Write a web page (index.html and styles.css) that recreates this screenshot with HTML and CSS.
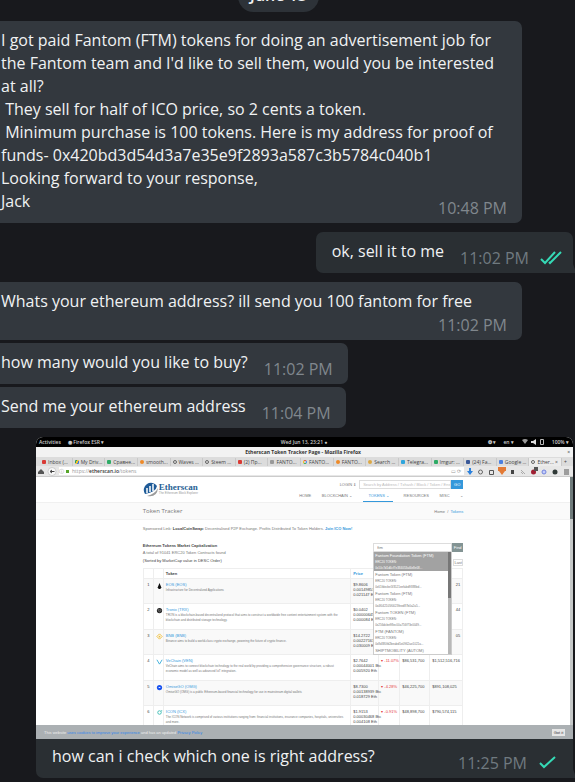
FILE: index.html
```html
<!DOCTYPE html>
<html lang="en">
<head>
  <meta charset="UTF-8">
  <meta name="viewport" content="width=device-width, initial-scale=1.0">
  <title>Chat</title>
  <link rel="stylesheet" href="styles.css">
</head>
<body>
  <main class="chat">
    <div class="date"><span>June 13</span></div>

    <div class="bubble in wide overlap">
      <p>I got paid Fantom (FTM) tokens for doing an advertisement job for the Fantom team and I'd like to sell them, would you be interested at all?<br>&nbsp;They sell for half of ICO price, so 2 cents a token.<br>&nbsp;Minimum purchase is 100 tokens. Here is my address for proof of funds- 0x420bd3d54d3a7e35e9f2893a587c3b5784c040b1<br>Looking forward to your response,<br>Jack</p>
      <time>10:48 PM</time>
    </div>

    <div class="bubble out">
      <p>ok, sell it to me</p>
      <time>11:02 PM</time>
      <svg class="ticks" viewBox="0 0 22 14" aria-label="Read"><path d="M1 8l4 4L15 1M9 11l1 1L21 1"/></svg>
    </div>

    <div class="bubble in wide stack">
      <p>Whats your ethereum address? ill send you 100 fantom for free</p>
      <time>11:02 PM</time>
    </div>

    <div class="bubble in next">
      <p>how many would you like to buy?</p>
      <time>11:02 PM</time>
    </div>

    <div class="bubble in next">
      <p>Send me your ethereum address</p>
      <time>11:04 PM</time>
    </div>

    <div class="photo">
      <div class="shot">
        <div class="topbar">
          <div class="topbar-left"><span>Activities</span><span>◉ Firefox ESR ▾</span></div>
          <span>Wed Jun 13, 23:21 ●</span>
          <div class="topbar-right">
            <span>❂ ▾</span><span>en ▾</span>
            <svg viewBox="0 0 24 8"><path d="M1 2q3-2 6 0L4 6z" fill="#999"/><path d="M10 3h2l3-2v6l-3-2h-2z" fill="#ddd"/><path d="M19.500 1.500h3v5h-3z" fill="none" stroke="#bbb"/></svg>
            <span>100% ▾</span>
          </div>
        </div>
        <div class="titlebar"><b>Etherscan Token Tracker Page - Mozilla Firefox</b><span>×</span></div>
        <div class="tabs">
          <span><i class="fav red"></i>Inbox (...</span>
          <span><i class="fav drive"></i>My Driv...</span>
          <span><i class="fav green"></i>Сравне...</span>
          <span><i class="fav orange"></i>smooth...</span>
          <span><i class="fav ring"></i>Waves ...</span>
          <span><i class="fav ring"></i>Steem ...</span>
          <span><i class="fav red"></i>(2) Пр...</span>
          <span><i class="fav grey"></i>FANTO...</span>
          <span><i class="fav google"></i>FANTO...</span>
          <span><i class="fav orange"></i>FANTO...</span>
          <span><i class="fav gold"></i>Search ...</span>
          <span><i class="fav sky"></i>Telegra...</span>
          <span><i class="fav green"></i>Imgur: ...</span>
          <span><i class="fav navy"></i>(24) Fa...</span>
          <span><i class="fav blue"></i>Google ...</span>
          <span class="current"><i class="fav ring"></i>Ether... ×</span>
          <span class="plus">+</span>
        </div>
        <div class="urlbar">
          <svg class="nav-icons" viewBox="0 0 30 9"><path d="M2 5l3-3 3 3v2H2z" fill="#555"/><circle cx="16" cy="4.500" r="4" fill="#fafafa" stroke="#aaa" stroke-width=".5"/><path d="M18.500 4.500h-4M16 3l-2 1.500L16 6" fill="none" stroke="#444"/></svg>
          <div class="address">
            <span class="info">ⓘ</span><i class="lock"></i>
            <span>https://<b>etherscan.io</b>/tokens</span>
            <span class="reload">▭ ⟳</span>
          </div>
          <svg class="tools" viewBox="0 0 104 9">
            <path d="M4 1h2v3h2L5 8 2 4h2z" fill="#2b80dc"/>
            <circle cx="15.500" cy="5" r="2" fill="none" stroke="#666"/>
            <path d="M24.500 3.500h4v4h-4z" fill="none" stroke="#555"/>
            <path d="M33 0h8v4h-1L37 8l-3-4h-1z" fill="#e37a35"/>
            <path d="M46 3h3v4h-3z" fill="#444"/>
            <path d="M56 3l4 4M56 5l2 2" stroke="#aaa" fill="none"/>
            <circle cx="68.500" cy="5" r="2.500" fill="#a01f33"/><path d="M69 0h4v4h-4z" fill="#555"/>
            <circle cx="79" cy="5" r="2" fill="#c4cdfa" stroke="#7183dd"/>
            <circle cx="90" cy="5" r="2.500" fill="#303a38"/>
            <path d="M99 3h5M99 5h5M99 7h5" stroke="#555"/>
          </svg>
        </div>

        <div class="page">
          <div class="header">
            <div class="wrap header-inner">
              <div class="logo">
                <svg viewBox="0 0 15 16"><path d="M2 13A7 7 0 1 1 14 5Q13 11 2 13z" fill="#1f5b98"/><path d="M4 15q8-2 11-8-1 10-11 8z" fill="#9b9b9b"/><path d="M4 7v5M7 5v6M10 3v7" stroke="#fff" stroke-width="1.500"/></svg>
                <div><strong>Etherscan</strong><small>The Ethereum Block Explorer</small></div>
              </div>
              <div class="header-right">
                <form class="search">
                  <a href="#login">LOGIN ⇟</a>
                  <input type="text" aria-label="Search" placeholder="Search by Address / Txhash / Block / Token / Ens">
                  <button type="button">GO</button>
                </form>
                <nav>
                  <a href="#home">HOME</a><a href="#blockchain">BLOCKCHAIN ⌄</a><a class="active" href="#tokens">TOKENS ⌄</a><a href="#resources">RESOURCES</a><a href="#misc">MISC</a><span>⌄</span>
                </nav>
              </div>
            </div>
          </div>
          <div class="band"><div class="wrap band-inner"><h1>Token Tracker</h1><span>Home &nbsp;/ &nbsp;<a href="#tokens">Tokens</a></span></div></div>

          <div class="wrap content">
            <p class="sponsor">Sponsored Link: <b>LocalCoinSwap:</b> Decentralised P2P Exchange. Profits Distributed To Token Holders. <a href="#ico">Join ICO Now!</a></p>
            <h2>Ethereum Tokens Market Capitalization</h2>
            <p class="total">A total of 91041 ERC20 Token Contracts found</p>
            <p class="sorted">(Sorted by MarketCap value in DESC Order)</p>
            <table>
              <thead>
                <tr><th class="c-num"></th><th class="c-icon"></th><th>Token</th><th class="c-price"><a href="#price">Price</a></th><th class="c-change"></th><th class="c-volume"></th><th class="c-cap"></th></tr>
              </thead>
              <tbody>
                <tr>
                  <td>1</td><td><svg viewBox="0 0 8 8"><path d="M4 1l2 5-1 2H3L2 6z" fill="#111"/></svg></td>
                  <td><a href="#eos">EOS (EOS)</a><p>Infrastructure for Decentralized Applications</p></td>
                  <td><b>$9.8606</b><br>0.00149857 Btc<br>0.021147 Eth</td><td></td><td></td><td class="end">21</td>
                </tr>
                <tr>
                  <td>2</td><td><svg viewBox="0 0 8 8"><circle cx="4" cy="4" r="3" fill="#222"/><path d="M2 3l4 .5L4 6z" fill="none" stroke="#bbb" stroke-width=".5"/></svg></td>
                  <td><a href="#trx">Tronix (TRX)</a><p>TRON is a blockchain-based decentralized protocol that aims to construct a worldwide free content entertainment system with the<br>blockchain and distributed storage technology.</p></td>
                  <td><b>$0.0402</b><br>0.00000645 Btc<br>0.000084 Eth</td><td></td><td></td><td class="end">44</td>
                </tr>
                <tr>
                  <td>3</td><td><svg viewBox="0 0 8 8"><path d="M4 1l3 3-3 3-3-3z" fill="none" stroke="#efbd35"/><circle cx="4" cy="4" r="1" fill="#efbd35"/></svg></td>
                  <td><a href="#bnb">BNB (BNB)</a><p>Binance aims to build a world-class crypto exchange, powering the future of crypto finance.</p></td>
                  <td><b>$14.2722</b><br>0.00227161 Btc<br>0.030009 Eth</td><td></td><td></td><td class="end">05</td>
                </tr>
                <tr>
                  <td>4</td><td><svg viewBox="0 0 8 8"><path d="M1 2l3 5 3-5" fill="none" stroke="#31a9d8"/></svg></td>
                  <td><a href="#ven">VeChain (VEN)</a><p>VeChain aims to connect blockchain technology to the real world by providing a comprehensive governance structure, a robust<br>economic model as well as advanced IoT integration.</p></td>
                  <td><b>$2.7642</b><br>0.00044001 Btc<br>0.005920 Eth</td><td class="down">▾ -11.07%</td><td>$86,531,700</td><td>$1,512,516,716</td>
                </tr>
                <tr>
                  <td>5</td><td><svg viewBox="0 0 8 8"><circle cx="4" cy="4" r="3" fill="#1a53f0"/><path d="M3 4h2" stroke="#fff"/></svg></td>
                  <td><a href="#omg">OmiseGO (OMG)</a><p>OmiseGO (OMG) is a public Ethereum-based financial technology for use in mainstream digital wallets</p></td>
                  <td><b>$8.7300</b><br>0.00138939 Btc<br>0.018729 Eth</td><td class="down">▾ -4.28%</td><td>$46,225,700</td><td>$891,108,025</td>
                </tr>
                <tr>
                  <td>6</td><td><svg viewBox="0 0 8 8"><circle cx="4" cy="4" r="2" fill="none" stroke="#35b9b0"/><circle cx="6.500" cy="2" r=".7" fill="#35b9b0"/></svg></td>
                  <td><a href="#icx">ICON (ICX)</a><p>The ICON Network is comprised of various institutions ranging from: financial institutions, insurance companies, hospitals, universities<br>and more.</p></td>
                  <td><b>$1.9153</b><br>0.00030468 Btc<br>0.004108 Eth</td><td class="down">▾ -0.91%</td><td>$48,898,700</td><td>$790,574,115</td>
                </tr>
              </tbody>
            </table>

            <div class="finder">
              <form class="find-row">
                <input type="text" aria-label="Find token" value="ftm">
                <button type="button">Find</button>
              </form>
              <button class="last" type="button">Last</button>
              <div class="options">
                <ul>
                  <li class="picked"><b>Fantom Foundation Token (FTM)</b><span>ERC20 TOKEN:</span><span>0x10c7d1d6cf7e384053af4e8e08...</span></li>
                  <li><b>Fantom Token (FTM)</b><span>ERC20 TOKEN:</span><span>0x61fdecbe5f3521eefabd9388bd...</span></li>
                  <li><b>Fantom Token (FTM)</b><span>ERC20 TOKEN:</span><span>0x4f042105f0023feed87b0a2a5...</span></li>
                  <li><b>Fantom TOKEN (FTM)</b><span>ERC20 TOKEN:</span><span>0x256dcbe98ec00a756f73e0049...</span></li>
                  <li><b>FTM (FANTOM)</b><span>ERC20 TOKEN:</span><span>0x8d380fd2beabd5e0962ae1021a...</span></li>
                  <li><b>SHIPTMOBILITY (AUTOM)</b></li>
                </ul>
              </div>
            </div>
          </div>
          <div class="scroll"></div>
          <div class="cookies">
            <span>This website <a href="#cookies">uses cookies to improve your experience</a> and has an updated <a href="#privacy">Privacy Policy</a></span>
            <button type="button">Got it</button>
          </div>
        </div>
      </div>
      <div class="caption">
        <p>how can i check which one is right address?</p>
        <time>11:25 PM</time>
        <svg class="tick" viewBox="0 0 17 13" aria-label="Sent"><path d="M1 7l4 4L16 1"/></svg>
      </div>
    </div>
  </main>
</body>
</html>
```

FILE: styles.css
```css
* {
  box-sizing: border-box;
}

body {
  margin: 0;
  background: #18191d;
  color: #f0f2f3;
  font-family: "Open Sans", "Noto Sans", sans-serif;
  font-size: 16px;
  line-height: 23px;
  overflow: hidden;
}

p, h1, h2, ul {
  margin: 0;
  padding: 0;
}

a {
  color: inherit;
  text-decoration: none;
}

.chat {
  display: flex;
  flex-direction: column;
  align-items: flex-start;
}

/* the pill is scrolled half out of view */
.date {
  align-self: center;
  margin-top: -19px;
}

.date span {
  display: block;
  padding: 3px 12px 5px;
  border-radius: 16px;
  background: #2d3238;
  font-weight: 600;
  margin-right: 18px;
}

.bubble {
  position: relative;
  display: flex;
  align-items: flex-end;
  gap: 16px;
  margin-top: 9px;
  padding: 8px 15px 4px 1px;
  border-radius: 0 7px 7px 0;
  background: #33383e;
}

.bubble p {
  padding-bottom: 6px;
}

time {
  font-size: 16px;
  line-height: 22px;
  color: #80878d;
  white-space: nowrap;
}

.wide {
  width: 100%;
  max-width: 522px;
}

.overlap {
  display: grid;
}

.overlap p, .overlap time {
  grid-area: 1 / 1;
}

.overlap time {
  justify-self: end;
}

.stack {
  flex-direction: column;
  gap: 0;
}

.stack p {
  align-self: flex-start;
  padding-bottom: 1px;
}

.next {
  margin-top: 3px;
}

.out {
  align-self: flex-end;
  margin-right: 2px;
  padding-left: 16px;
  padding-right: 11px;
  border-radius: 7px 7px 0 7px;
  background: #2a2f33;
}

/* message tail */
.out::after, .photo::after {
  content: "";
  position: absolute;
  right: -2px;
  bottom: 0;
  width: 2px;
  height: 9px;
  background: #2a2f33;
  clip-path: polygon(0 0, 100% 60%, 100% 100%, 0 100%);
}

.out time, .caption time {
  color: #707a80;
}

.ticks, .tick {
  fill: none;
  stroke: #35dab6;
  stroke-width: 2;
}

.ticks {
  width: 22px;
  height: 14px;
  margin: 0 0 4px -5px;
}

.tick {
  width: 17px;
  height: 13px;
  margin: 0 0 5px -4px;
}

.photo {
  position: relative;
  align-self: stretch;
  margin: 9px 2px 0 36px;
  border-radius: 7px 7px 0 7px;
  background: #2a2f33;
}

.caption {
  display: flex;
  align-items: flex-end;
  gap: 16px;
  padding: 6px 17px 4px 16px;
}

.caption p {
  flex: 1;
  padding-bottom: 6px;
}

/* shared desktop picture */
.shot {
  overflow: hidden;
  border-radius: 7px 7px 0 0;
  background: #fff;
  color: #444;
  font-size: 5px;
  line-height: 6px;
  white-space: nowrap;
}

.shot svg {
  display: block;
}

.shot input, .shot button {
  margin: 0;
  padding: 0;
  border: 0;
  border-radius: 0;
  font: inherit;
  color: inherit;
}

.topbar {
  display: grid;
  grid-template-columns: 1fr auto 1fr;
  align-items: center;
  height: 10px;
  padding: 0 4px 0 3px;
  background: #000;
  color: #ccc;
  font-weight: 600;
}

.topbar-left, .topbar-right {
  display: flex;
  align-items: center;
  gap: 7px;
}

.topbar-right {
  justify-content: flex-end;
}

.topbar-right svg {
  width: 24px;
  height: 8px;
}

.titlebar {
  display: grid;
  grid-template-columns: 1fr auto;
  align-items: center;
  height: 10px;
  padding: 0 3px;
  background: #f2f2f2;
  text-align: center;
  color: #333;
}

.tabs {
  display: grid;
  grid-template-columns: repeat(16, 1fr) 11px;
  align-items: center;
  height: 9px;
  padding-left: 4px;
  background: #dcdcdc;
}

.tabs span {
  display: flex;
  align-items: center;
  gap: 2px;
  height: 8px;
  padding-left: 2px;
  border-right: 1px solid #c9c9c9;
  overflow: hidden;
}

.tabs .current {
  background: #ececec;
}

.tabs .plus {
  border: 0;
}

.fav {
  flex: none;
  width: 4px;
  height: 4px;
  border-radius: 1px;
}

.red { background: #d93a34; }
.green { background: #2eab66; }
.orange { background: #ee8a28; border-radius: 2px; }
.gold { background: #dca845; border-radius: 2px; }
.sky { background: #2fa5dc; }
.navy { background: #3b5998; }
.blue { background: #4a7fe0; }
.grey { background: #999; }
.ring { border: 1px solid #666; border-radius: 2px; }
.google { border: 1px solid; border-color: #df4a3c #4285f4 #34a853 #fbbc05; border-radius: 2px; }
.drive { background: linear-gradient(120deg, #2c9e5a 33%, #f2c02c 33%, #f2c02c 66%, #3b79df 66%); }

.urlbar {
  display: flex;
  align-items: center;
  height: 11px;
  padding-right: 4px;
  background: #e7e7e7;
  border-bottom: 1px solid #ccc;
}

.nav-icons {
  width: 30px;
  height: 9px;
  margin-right: -7px;
}

.address {
  display: flex;
  flex: 1;
  align-items: center;
  gap: 2px;
  height: 8px;
  padding-right: 3px;
  background: #fff;
  color: #999;
}

.address b {
  color: #333;
  font-weight: 600;
}

.lock {
  width: 3px;
  height: 3px;
  margin-right: 1px;
  background: #58a52b;
}

.reload {
  margin-left: auto;
}

.tools {
  width: 104px;
  height: 9px;
  margin-left: 1px;
}

.page {
  position: relative;
  height: 262px;
  padding-right: 3px;
  overflow: hidden;
  background: #fff;
  font-family: "Liberation Sans", Arial, sans-serif;
  font-size: 4px;
  line-height: 5px;
  color: #777;
}

.wrap {
  width: 60%;
  margin: 0 auto;
}

.header {
  height: 25px;
}

.header-inner {
  display: flex;
  justify-content: space-between;
}

.logo {
  display: flex;
  gap: 1px;
  padding-top: 4px;
}

.logo svg {
  width: 15px;
  height: 16px;
}

.logo strong, .logo small {
  display: block;
}

.logo strong {
  font: bold 9px/9px "Liberation Serif", serif;
  padding-top: 2px;
  color: #285f94;
}

.logo small {
  font-size: 3px;
  line-height: 3px;
  color: #999;
}

.header-right {
  width: 164px;
  padding-top: 3px;
}

.search {
  display: flex;
  justify-content: flex-end;
  align-items: center;
}

.search a {
  margin-right: 3px;
}

.shot .search input {
  width: 92px;
  height: 9px;
  padding-left: 3px;
  border: 1px solid #ddd;
}

.search input::placeholder {
  color: #bbb;
}

.shot .search button {
  width: 12px;
  height: 9px;
  background: #3498db;
  color: #fff;
}

nav {
  display: flex;
  justify-content: space-between;
  padding-top: 3px;
}

nav a, nav span {
  height: 10px;
  padding-top: 1px;
}

nav .active {
  padding-left: 6px;
  padding-right: 4px;
  border-bottom: 1px solid #3498db;
}

.page .active, .page td a, .page th a, .band a, .sponsor a {
  color: #3498db;
}

.band {
  height: 18px;
  background: #fafafa;
  border-top: 1px solid #f0f0f0;
  border-bottom: 1px solid #f3f3f3;
}

.band-inner {
  display: flex;
  justify-content: space-between;
  align-items: center;
  height: 16px;
}

.band h1 {
  font: 6px/8px "Open Sans", sans-serif;
}

.content {
  position: relative;
}

.sponsor {
  padding-top: 6px;
}

.sponsor a {
  font-weight: bold;
}

.sponsor b, .content h2, .sorted {
  color: #444;
}

.content h2 {
  padding-top: 12px;
  font-size: 4px;
  line-height: 6px;
}

.total {
  line-height: 7px;
}

.sorted {
  padding: 2px 0 5px;
}

table {
  width: 100%;
  table-layout: fixed;
  border-collapse: collapse;
  border: 1px solid #eee;
}

th, td {
  height: 10px;
  padding: 0 2px;
  border-right: 1px solid #eee;
  border-bottom: 1px solid #eee;
  text-align: left;
  vertical-align: middle;
  color: #444;
}

td {
  height: 25px;
  padding-top: 3px;
  vertical-align: top;
}

tr:nth-child(even) td {
  height: 26px;
}

td:first-child {
  text-align: center;
}

td:nth-child(3) {
  overflow: hidden;
}

td svg {
  width: 7px;
  height: 7px;
}

td p {
  padding-top: 1px;
  font-size: 3px;
  color: #777;
}

td b {
  font-weight: normal;
}

tbody tr:nth-child(odd) td {
  background: #f9f9f9;
}

.c-num, .c-icon { width: 10px; }
.c-price { width: 28px; }
.c-change { width: 21px; }
.c-volume { width: 30px; }
.c-cap { width: 33px; }

.page .down {
  color: #e5393d;
}

.end {
  text-align: right;
}

/* token lookup opened over the table */
.finder {
  position: absolute;
  top: 23px;
  right: 0;
  width: 90px;
}

.find-row {
  display: flex;
}

.shot .find-row input {
  flex: 1;
  min-width: 0;
  height: 9px;
  padding-left: 3px;
  border: 1px solid #ddd;
}

.shot .find-row button {
  width: 11px;
  height: 9px;
  background: #839494;
  color: #fff;
}

.shot .last {
  position: absolute;
  top: 16px;
  right: 0;
  width: 10px;
  height: 7px;
  border: 1px solid #ddd;
  background: #fff;
}

.options {
  width: 79px;
  height: 103px;
  overflow: hidden;
  border: 1px solid #ccc;
  border-top: 0;
  background: linear-gradient(#777 46px, #b8b8b8 46px) right / 3px no-repeat #fff;
}

.options ul {
  margin-right: 3px;
  list-style: none;
}

.options li {
  height: 19px;
  padding: 1px 0 0 1px;
}

.options b, .options span {
  display: block;
  line-height: 6px;
  font-weight: normal;
}

.options span {
  font-size: 3px;
}

.options .picked {
  background: #a2a2a2;
  color: #fff;
}

.scroll {
  position: absolute;
  top: 0;
  right: 0;
  width: 3px;
  height: 100%;
  background: linear-gradient(#6f7b7b 42px, #c6c9c9 42px);
}

.cookies {
  position: absolute;
  left: 0;
  right: 0;
  bottom: 0;
  display: flex;
  justify-content: space-between;
  align-items: center;
  height: 14px;
  padding: 0 8px;
  background: #a8adb0f5;
  color: #eee;
}

.cookies a {
  color: #3386e8;
}

.shot .cookies button {
  width: 13px;
  height: 7px;
  background: #e6e6e6;
  color: #333;
}
```
